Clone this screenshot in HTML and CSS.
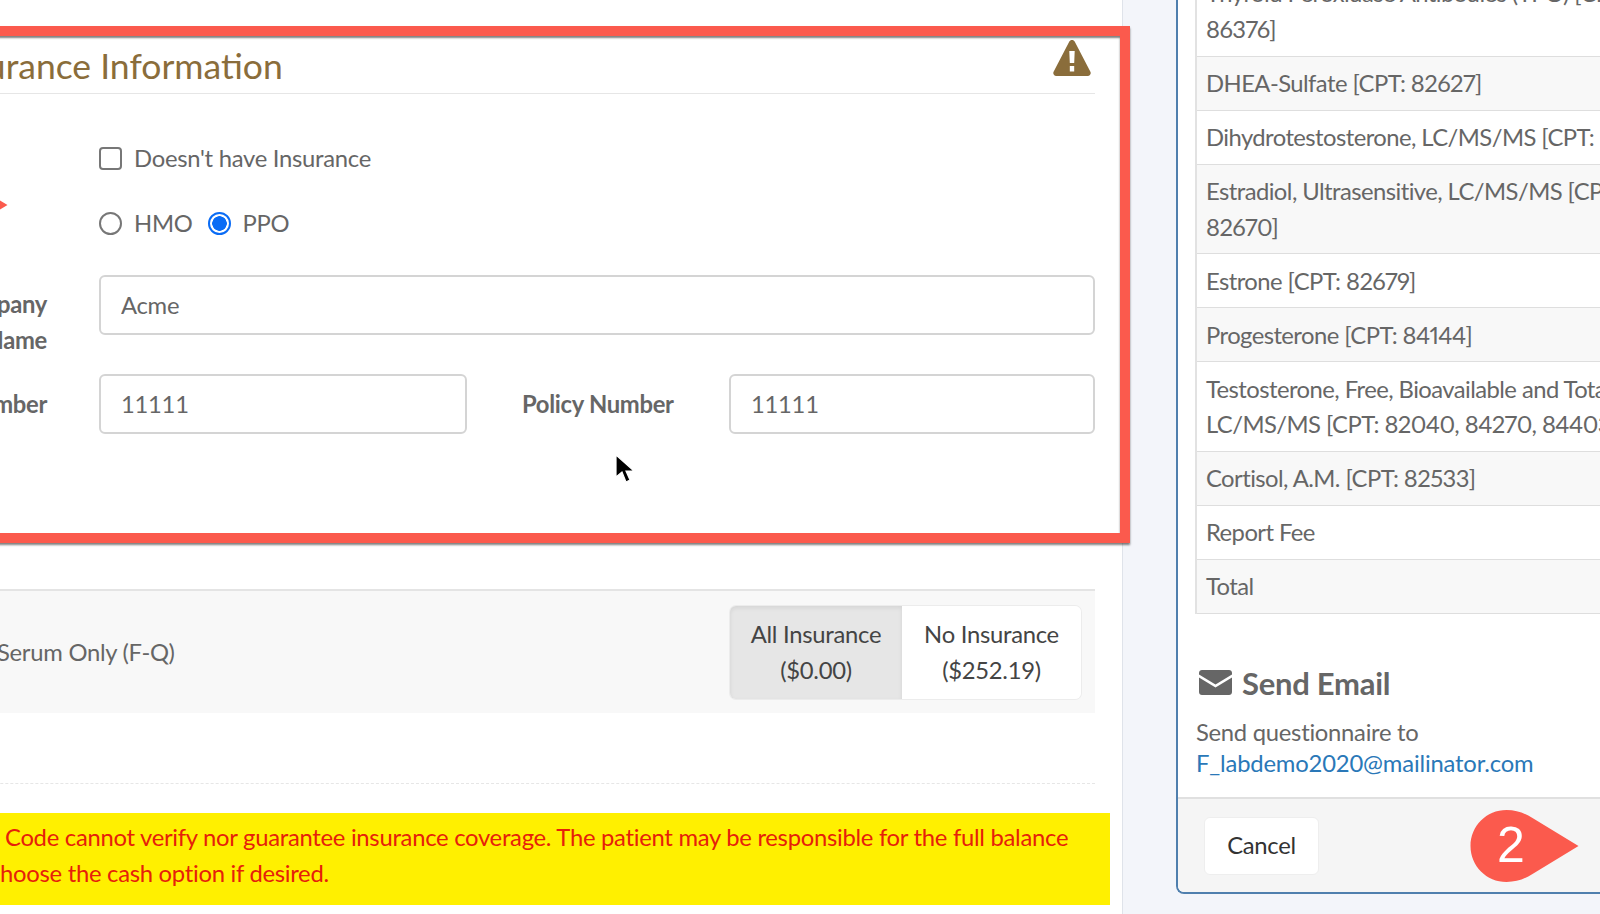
FILE: index.html
```html
<!DOCTYPE html>
<html lang="en">
<head>
  <meta charset="UTF-8">
  <meta name="viewport" content="width=device-width, initial-scale=1.0">
  <title>Insurance Information</title>
  <link rel="stylesheet" href="styles.css">
</head>
<body>

  <div class="page">
    <!-- Left column: insurance form, cropped on its left side -->
    <main class="main">
      <div class="section-head">
        <h2 class="section-title">Insurance Information</h2>
        <svg class="warn-icon" viewBox="0 0 38 36" aria-hidden="true">
          <path fill-rule="evenodd" d="M19 0c1.2 0 2.2.7 2.8 1.7l15.600 30c1 2-.3 4.300-2.600 4.300H3.200C.9 36-.4 33.700.6 31.700l15.600-30C16.800.7 17.800 0 19 0zM16.300 11l.5 12h4.400l.5-12zM16.800 26v5.500h4.400V26z"/>
        </svg>
      </div>

      <div class="check-row">
        <label class="check"><input type="checkbox"> Doesn't have Insurance</label>
      </div>

      <div class="radio-row">
        <label class="check"><input type="radio" name="plan"> HMO</label>
        <label class="check"><input type="radio" name="plan" checked> PPO</label>
      </div>

      <div class="form-row company-row">
        <label class="form-label">Company<br>Name</label>
        <input class="text-input" type="text" value="Acme">
      </div>

      <div class="form-row number-row">
        <label class="form-label">Number</label>
        <input class="text-input" type="text" value="11111">
        <label class="policy-label">Policy Number</label>
        <input class="text-input" type="text" value="11111">
      </div>

      <div class="test-row">
        <span class="test-name">Serum Only (F-Q)</span>
        <div class="btn-group">
          <button class="btn-option active">All Insurance<br>($0.00)</button>
          <button class="btn-option">No Insurance<br>($252.19)</button>
        </div>
      </div>

      <div class="dashed"></div>

      <p class="notice">Code cannot verify nor guarantee insurance coverage. The patient may be responsible for the full balance<br>choose the cash option if desired.</p>
    </main>

    <!-- Right column: order summary and send email -->
    <aside class="side">
      <table class="test-table">
        <tr><td>Thyroid Peroxidase Antibodies (TPO) [CPT:<br>86376]</td></tr>
        <tr class="shade"><td>DHEA-Sulfate [CPT: 82627]</td></tr>
        <tr><td>Dihydrotestosterone, LC/MS/MS [CPT: 82651]</td></tr>
        <tr class="shade"><td>Estradiol, Ultrasensitive, LC/MS/MS [CPT:<br>82670]</td></tr>
        <tr><td>Estrone [CPT: 82679]</td></tr>
        <tr class="shade"><td>Progesterone [CPT: 84144]</td></tr>
        <tr><td>Testosterone, Free, Bioavailable and Total,<br>LC/MS/MS [CPT: 82040, 84270, 84403]</td></tr>
        <tr class="shade"><td>Cortisol, A.M. [CPT: 82533]</td></tr>
        <tr><td>Report Fee</td></tr>
        <tr class="shade"><td>Total</td></tr>
      </table>

      <h3 class="email-title">
        <svg class="mail-icon" viewBox="0 0 33 25" aria-hidden="true">
          <path d="M3 0h27c1.700 0 3 1.300 3 3v1.500L16.500 14.500 0 4.500V3c0-1.700 1.300-3 3-3z"/>
          <path d="M0 7.500l16.500 10 16.500-10V22c0 1.700-1.300 3-3 3H3c-1.700 0-3-1.300-3-3z"/>
        </svg>
        Send Email
      </h3>
      <p class="email-text">Send questionnaire to<br><a href="#">F_labdemo2020@mailinator.com</a></p>

      <div class="side-foot">
        <button class="btn-cancel">Cancel</button>
      </div>
    </aside>
  </div>

  <!-- Annotations drawn over the screenshot -->
  <div class="callout-box"></div>
  <svg class="marker marker-one" viewBox="0 0 108 72" aria-hidden="true">
    <path d="M36 0c10 0 18 3 26 8l46 28-46 28c-8 5-16 8-26 8C16 72 0 56 0 36S16 0 36 0z"/>
  </svg>
  <div class="marker-two">
    <svg class="marker" viewBox="0 0 108 72" aria-hidden="true">
      <path d="M36 0c10 0 18 3 26 8l46 28-46 28c-8 5-16 8-26 8C16 72 0 56 0 36S16 0 36 0z"/>
    </svg>
    <span class="marker-num">2</span>
  </div>
  <svg class="cursor" viewBox="0 0 20 30" aria-hidden="true">
    <path d="M1 1v22l6-5 4 10 4-2-4-9h8z" fill="#000" stroke="#fff" stroke-width="1.200"/>
  </svg>

</body>
</html>
```

FILE: styles.css
```css
/* General Styles */
html, body {
  height: 914px;
  overflow: hidden;
}

body {
  margin: 0;
  position: relative;
  background: #f3f5fa;
  font-family: 'Lato', 'Noto Sans', sans-serif;
  font-size: 23.800px;
  line-height: 35.700px;
  letter-spacing: -0.270px; /* Lato runs a little wide here */
  color: #666;
}

.page {
  display: flex;
  align-items: flex-start;
  margin-left: -200px; /* the form runs off the left edge */
}

/* Left column */
.main {
  box-sizing: border-box;
  width: 1323px;
  height: 914px;
  padding: 38px 27px 0 0;
  background: #fff;
  border-right: 1px solid #dfe3ea;
}

.section-head {
  display: flex;
  justify-content: space-between;
  align-items: flex-start;
  height: 55px;
  padding-right: 4px;
  border-bottom: 1px solid #e6e6e6;
}

.section-title {
  margin: 0 0 0 141px;
  font-size: 35.500px;
  line-height: 56px;
  font-weight: 400;
  letter-spacing: 0;
  color: #8a6d3b;
}

.warn-icon {
  width: 38px;
  height: 36px;
  margin-top: 2px;
  fill: #8a6d3b;
}

.check-row {
  margin: 47px 0 0 299px;
}

.radio-row {
  display: flex;
  gap: 15px;
  margin: 29px 0 0 299px;
}

.check {
  display: flex;
  align-items: center;
  gap: 12px;
}

.check input {
  appearance: none;
  box-sizing: border-box;
  width: 23px;
  height: 23px;
  margin: 0;
  background: #fff;
  border: 2px solid #777;
  border-radius: 4px;
}

.check input[type="radio"] {
  border-radius: 50%;
}

.check input[type="radio"]:checked {
  border-color: #0a6cf5;
  background: radial-gradient(circle, #0a6cf5 0 7px, #fff 7.500px);
}

.form-row {
  display: flex;
  align-items: center;
}

.company-row {
  align-items: flex-start;
  margin-top: 34px;
}

.number-row {
  margin-top: 15px;
}

.form-label {
  flex: 0 0 247px;
  text-align: right;
  font-weight: 700;
  letter-spacing: -0.300px;
}

.company-row .form-label {
  padding-top: 12px;
}

.number-row .form-label,
.policy-label {
  padding-top: 3px;
}

.text-input {
  box-sizing: border-box;
  flex: 1;
  min-width: 0;
  height: 60px;
  margin-left: 52px;
  padding: 0 20px;
  font: inherit;
  letter-spacing: inherit;
  color: #666;
  background: #fff;
  border: 2px solid #d4d4d4;
  border-radius: 6px;
}

.number-row .text-input {
  flex: 0 0 368px;
}

.policy-label {
  flex: 0 0 154px;
  margin-left: 55px;
  font-weight: 700;
  letter-spacing: -0.300px;
  white-space: nowrap;
}

.number-row .policy-label + .text-input {
  flex: 0 0 366px;
  margin-left: 53px;
}

.test-row {
  display: flex;
  justify-content: space-between;
  align-items: center;
  height: 124px;
  margin-top: 155px;
  padding: 2px 14px 0 197px;
  box-sizing: border-box;
  background: #f8f8f8;
  border-top: 2px solid #e4e4e4;
}

.btn-group {
  display: flex;
  border-radius: 6px;
  box-shadow: 0 0 0 1px #ececec;
}

.btn-option {
  width: 172px;
  height: 93px;
  padding: 0;
  font: inherit;
  letter-spacing: inherit;
  color: #444;
  background: #fff;
  border: none;
  border-radius: 0 6px 6px 0;
}

.btn-option + .btn-option {
  width: 179px;
}

.btn-option.active {
  background: #e6e6e6;
  border-radius: 6px 0 0 6px;
  box-shadow: inset 0 2px 4px rgba(0, 0, 0, 0.08);
}

.dashed {
  margin-top: 70px;
  border-top: 1px dashed #e6e6e6;
}

.notice {
  margin: 29px -15px 0 189px;
  height: 92px;
  box-sizing: border-box;
  padding-top: 7px;
  text-indent: 16px;
  background: #fff000;
  color: #e6200a;
}

/* Right column */
.side {
  box-sizing: border-box;
  display: flex;
  flex-direction: column;
  flex: 0 0 600px;
  height: 894px;
  margin-left: 53px;
  background: #fff;
  border-left: 2px solid #4f7fae;
  border-bottom: 2px solid #4f7fae;
  border-bottom-left-radius: 8px;
  overflow: hidden;
}

.test-table {
  width: 600px;
  margin: -33px 0 0 17px;
  border-collapse: collapse;
  border-left: 2px solid #e2e2e2;
  white-space: nowrap;
  letter-spacing: -0.550px;
  font-variant-numeric: proportional-nums;
}

.test-table td {
  padding: 9.200px 9px 8.100px;
  border-bottom: 1px solid #dedede;
}

.test-table .shade td {
  background: #f8f8f8;
}

.email-title {
  display: flex;
  align-items: center;
  gap: 10px;
  margin: 49px 0 0 21px;
  font-size: 31px;
  line-height: 40px;
  font-weight: 700;
}

.mail-icon {
  width: 33px;
  height: 25px;
  fill: #666;
}

.email-text {
  margin: 14px 0 0 18px;
  line-height: 31.500px;
}

.email-text a {
  color: #2a78b8;
  letter-spacing: -0.170px;
  text-decoration: none;
}

.side-foot {
  flex: 1;
  margin-top: 17px;
  padding: 18px 26px;
  background: #f5f5f5;
  border-top: 2px solid #e0e0e0;
}

.btn-cancel {
  width: 115px;
  height: 58px;
  padding: 0;
  font: inherit;
  letter-spacing: inherit;
  color: #333;
  background: #fff;
  border: 1px solid #eee;
  border-radius: 6px;
}

/* Annotations */
.callout-box {
  position: absolute;
  left: -20px;
  top: 26px;
  width: 1130px;
  height: 497px;
  border: 10px solid #fb5a4d;
  box-shadow: 0 2px 2px rgba(0, 0, 0, 0.5), inset 0 2px 2px rgba(0, 0, 0, 0.5);
}

.marker {
  display: block;
  width: 109px;
  height: 72px;
  fill: #fb5a4d;
}

.marker-one {
  position: absolute;
  left: -101px;
  top: 169px;
}

.marker-two {
  position: absolute;
  left: 1470px;
  top: 810px;
}

.marker-num {
  position: absolute;
  left: 27px;
  top: -1px;
  font-family: 'Liberation Sans', sans-serif;
  font-size: 50px;
  line-height: 72px;
  letter-spacing: 0;
  color: #fff;
}

.cursor {
  position: absolute;
  left: 615px;
  top: 454px;
  width: 20px;
  height: 30px;
}
```
